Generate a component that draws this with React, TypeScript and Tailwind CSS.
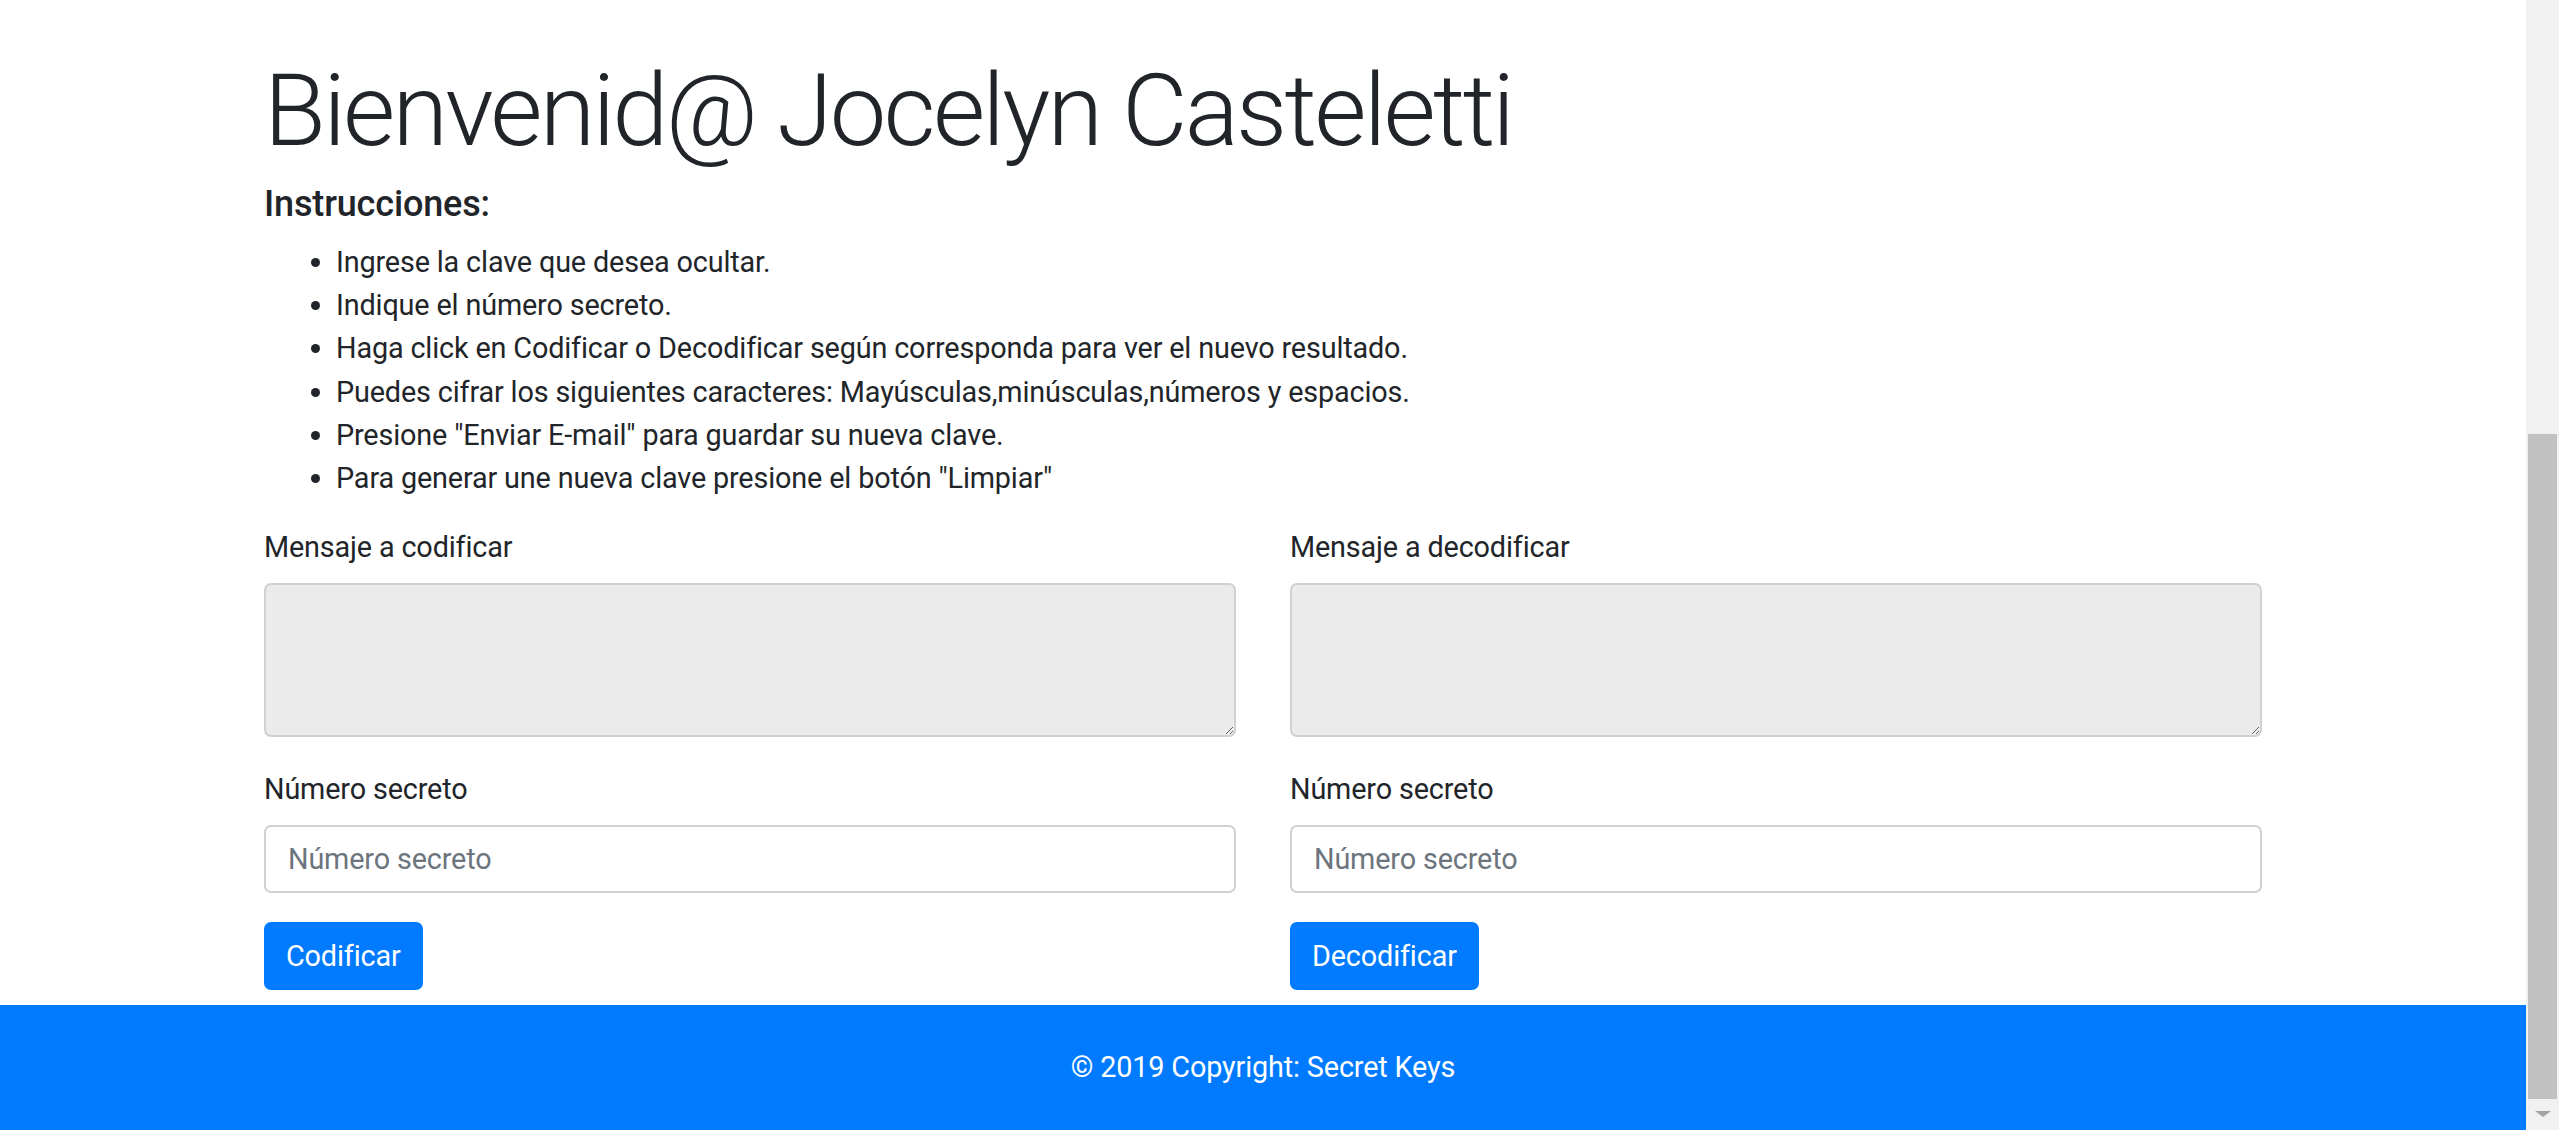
import React from 'react';

const steps = [
  'Ingrese la clave que desea ocultar.',
  'Indique el número secreto.',
  'Haga click en Codificar o Decodificar según corresponda para ver el nuevo resultado.',
  'Puedes cifrar los siguientes caracteres: Mayúsculas,minúsculas,números y espacios.',
  'Presione "Enviar E-mail" para guardar su nueva clave.',
  'Para generar une nueva clave presione el botón "Limpiar"',
];

const Panel = ({ title, action }: { title: string; action: string }) => {
  return (
    <div className="flex flex-col">
      <label className="block mb-[14px] leading-[43px]">{title}</label>
      <textarea
        readOnly
        className="w-full h-[154px] border-2 border-[#d0d1d2] rounded-[7px] bg-[#ebebeb] mb-[31px] outline-none"
      />
      <label className="block mb-[14px] leading-[43px]">Número secreto</label>
      <input
        type="text"
        placeholder="Número secreto"
        className="w-full h-[68px] px-[22px] border-2 border-[#d0d1d2] rounded-[7px] bg-white mb-[29px] text-[28.8px] tracking-[-0.15px] text-[#495057] placeholder:text-[#6c757d] outline-none"
      />
      <div>
        <button className="h-[68px] px-[22px] bg-[#007bff] text-white rounded-[7px] leading-[43px]">
          {action}
        </button>
      </div>
    </div>
  );
};

const App = () => {
  return (
    <div className="flex w-full h-[1130px] overflow-hidden bg-white text-[#212529] text-[28.8px] leading-[43.2px] tracking-[-0.15px] [font-family:Roboto,'Liberation_Sans',sans-serif]">
      <div className="flex-1 flex flex-col min-w-0">
        <main className="w-[1998px] mx-auto pt-[50px]">
          <h1 className="text-[101px] font-light leading-[121px] tracking-[-2.8px] mb-[12px]">Bienvenid@ Jocelyn Casteletti</h1>
          <h5 className="text-[36px] font-medium leading-[43px] mb-[15px]">Instrucciones:</h5>
          <ul className="list-disc pl-[72px] mb-[26px]">
            {steps.map((s) => (
              <li key={s}>{s}</li>
            ))}
          </ul>
          <div className="grid grid-cols-2 gap-x-[54px]">
            <Panel title="Mensaje a codificar" action="Codificar" />
            <Panel title="Mensaje a decodificar" action="Decodificar" />
          </div>
        </main>
        <footer className="mt-auto h-[125px] bg-[#007bff] flex items-center justify-center text-white">
          © 2019 Copyright: Secret Keys
        </footer>
      </div>
      {/* scrollbar */}
      <div className="w-[33px] bg-[#f1f1f1] flex flex-col items-center pt-[434px]">
        <div className="w-[29px] h-[665px] bg-[#c1c1c1]" />
        <div className="mt-[12px] w-0 h-0 border-l-[8px] border-r-[8px] border-t-[6px] border-l-transparent border-r-transparent border-t-[#a3a3a3]" />
      </div>
    </div>
  );
};

export default App;
